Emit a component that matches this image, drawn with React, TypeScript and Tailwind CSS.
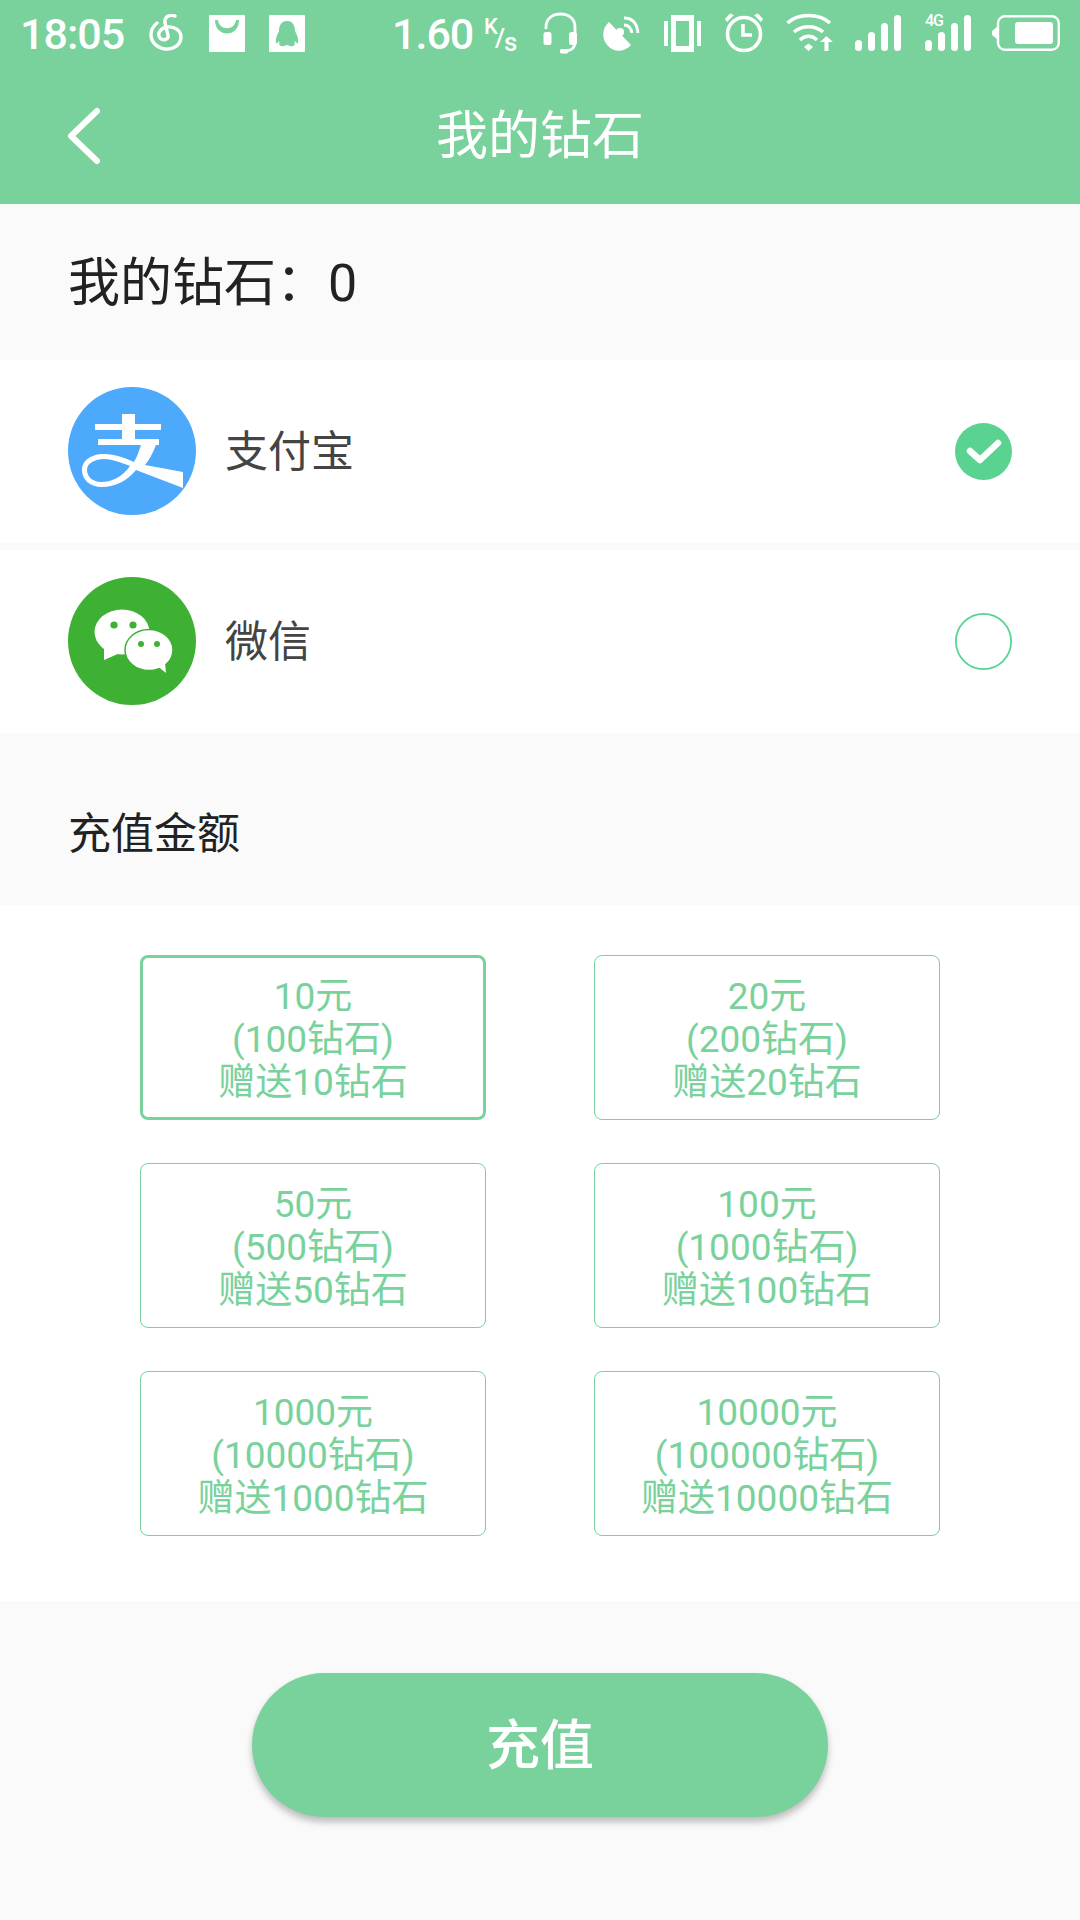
import React from 'react';

const options = [
  { price: '10元', stones: '(100钻石)', bonus: '赠送10钻石', selected: true },
  { price: '20元', stones: '(200钻石)', bonus: '赠送20钻石' },
  { price: '50元', stones: '(500钻石)', bonus: '赠送50钻石' },
  { price: '100元', stones: '(1000钻石)', bonus: '赠送100钻石' },
  { price: '1000元', stones: '(10000钻石)', bonus: '赠送1000钻石' },
  { price: '10000元', stones: '(100000钻石)', bonus: '赠送10000钻石' },
];

const StatusBar = () => (
  <div className="flex h-[66px] items-center text-white">
    <span className="mt-[2px] ml-[20px] w-[114px] text-[43px] leading-none font-medium tracking-[-1px]">18:05</span>
    {/* netease */}
    <svg className="ml-[15px]" width="36" height="38" viewBox="0 0 36 38" fill="none" stroke="white" strokeWidth="3.4" strokeLinecap="round">
      <path d="M26 2 C20 0 15 3 16 9 L19 21 C20 26 14 27 11 24 C8 20 11 14 18 13 C26 12 32 17 32 23 C32 31 24 36 16 35 C8 34 2 28 2 21 C2 16 4 12 8 9" />
    </svg>
    {/* bag */}
    <svg className="ml-[24px]" width="36" height="37" viewBox="0 0 36 37">
      <path fillRule="evenodd" fill="white" d="M1 0 H35 a1 1 0 0 1 1 1 V36 a1 1 0 0 1-1 1 H1 a1 1 0 0 1-1-1 V1 a1 1 0 0 1 1-1 Z M6 5 C6 23 30 23 30 5 H27 C26 16 10 16 9 5 Z" />
    </svg>
    {/* qq */}
    <svg className="ml-[24px]" width="36" height="37" viewBox="0 0 36 37">
      <path fillRule="evenodd" fill="white" d="M1 0 H35 a1 1 0 0 1 1 1 V36 a1 1 0 0 1-1 1 H1 a1 1 0 0 1-1-1 V1 a1 1 0 0 1 1-1 Z M18 6 C12 6 10 11 10 16 C8 20 6 24 7 28 C8 29 9 27 10 26 C11 28 9 30 12 31 C15 32 16 30 18 30 C20 30 21 32 24 31 C27 30 25 28 26 26 C27 27 28 29 29 28 C30 24 28 20 26 16 C26 11 24 6 18 6 Z" />
    </svg>
    <span className="mt-[2px] ml-[87px] w-[78px] text-[43px] leading-none font-medium tracking-[-1px]">1.60</span>
    <span className="ml-[14px] flex h-[37px] w-[36px] leading-none font-medium">
      <span className="mt-[1px] text-[22px]">K</span>
      <span className="mt-[10px] -ml-[3px] text-[26px] leading-none">/</span>
      <span className="mt-[14px] -ml-[1px] text-[26px]">s</span>
    </span>
    {/* headset */}
    <svg className="ml-[23px]" width="35" height="42" viewBox="0 0 35 42" fill="none" stroke="white">
      <path d="M3 17 V15 C3 7 9 2 17.500 2 C26 2 32 7 32 15 V30 C32 36 28 39 22 39" strokeWidth="2.800" />
      <rect x="0.500" y="20" width="8" height="13" rx="2.500" fill="white" stroke="none" />
      <rect x="26" y="20" width="8" height="13" rx="2.500" fill="white" stroke="none" />
      <rect x="17" y="37" width="8" height="4.500" rx="1.500" fill="white" stroke="none" />
    </svg>
    {/* dish */}
    <svg className="ml-[24px]" width="38" height="40" viewBox="0 0 38 40" fill="none">
      <path d="M7 9 L29 32 C23 39 12 40 6 33 C-1 26 0 15 7 9 Z" fill="white" />
      <circle cx="18" cy="19" r="4" fill="white" />
      <path d="M20 13 C24 13 27 16 28 21 M20 6 C28 6 33 11 34 21" stroke="white" strokeWidth="2.800" transform="translate(2 -1)" />
    </svg>
    {/* vibrate */}
    <svg className="ml-[24px]" width="37" height="37" viewBox="0 0 37 37">
      <path fillRule="evenodd" fill="white" d="M7 0 H30 V37 H7 Z M12 6 V31 H25 V6 Z M0 6 H4 V31 H0 Z M33 6 H37 V31 H33 Z" />
    </svg>
    {/* alarm */}
    <svg className="ml-[24px]" width="38" height="40" viewBox="0 0 38 40" fill="none" stroke="white">
      <circle cx="19" cy="21" r="16.500" strokeWidth="3.600" />
      <path d="M18 11 V22 H27" strokeWidth="3.600" />
      <path d="M0 6 L5 0.500 L9 2 L2 9 Z M38 6 L33 0.500 L29 2 L36 9 Z" fill="white" stroke="none" />
    </svg>
    {/* wifi with upload arrow */}
    <svg className="ml-[23px]" width="48" height="40" viewBox="0 0 48 40" fill="none" stroke="white" strokeWidth="3.600">
      <path d="M1.500 10 C12 0 33 0 44 10" />
      <path d="M8 19 C16 12 29 12 37 19" />
      <path d="M14 27 C19 22 26 22 31 27" />
      <path d="M18 34 L22.500 30.500 L27 34 L22.500 38 Z" fill="white" stroke="none" />
      <path d="M34 29 L40.500 23 L47 29 H42.500 V38 H38.500 V29 Z" fill="white" stroke="none" />
    </svg>
    {/* signal */}
    <svg className="ml-[21px]" width="46" height="36" viewBox="0 0 46 36" fill="white">
      <rect x="0" y="25" width="7" height="11" rx="3.500" />
      <rect x="13" y="17" width="7" height="19" rx="3.500" />
      <rect x="26" y="8" width="7" height="28" rx="3.500" />
      <rect x="39" y="0" width="7" height="36" rx="3.500" />
    </svg>
    {/* 4g signal */}
    <div className="relative ml-[24px] h-[36px] w-[46px]">
      <span className="absolute -top-[2px] left-0 text-[16px] leading-none font-medium tracking-[-1px]">4G</span>
      <svg width="46" height="36" viewBox="0 0 46 36" fill="white">
        <rect x="0" y="25" width="7" height="11" rx="3.500" />
        <rect x="13" y="17" width="7" height="19" rx="3.500" />
        <rect x="26" y="8" width="7" height="28" rx="3.500" />
        <rect x="39" y="0" width="7" height="36" rx="3.500" />
      </svg>
    </div>
    {/* battery */}
    <svg className="ml-[21px]" width="68" height="36" viewBox="0 0 68 36" fill="none">
      <rect x="6" y="1.200" width="60.800" height="33.600" rx="7" stroke="white" strokeWidth="2.400" />
      <path d="M5 12 L0 16 V20 L5 24 Z" fill="white" />
      <rect x="23" y="7" width="38" height="22" rx="3" fill="white" />
    </svg>
  </div>
);

const AlipayIcon = () => (
  <svg width="128" height="128" viewBox="0 0 128 128" className="-mt-[2px] shrink-0">
    <circle cx="64" cy="64" r="64" fill="#4DA9FB" />
    <g fill="white">
      <rect x="27" y="37" width="66" height="6" />
      <rect x="54" y="27" width="13" height="28" />
      <rect x="30" y="52" width="61" height="6" />
      <path
        fillRule="evenodd"
        d="M73 58 H88 C85 66 81 73 77 78 L115 85 V101 L68 83 C58 95 46 100 34 100 C21 100 14 92 14 83 C14 73 24 67 36 67 C47 67 57 71 66 75 C69 70 71 64 73 58 Z M33 95 C25 95 19 90 19 83 C19 76 27 72 36 72 C45 72 54 76 62 79 C55 89 45 95 33 95 Z"
      />
    </g>
  </svg>
);

const WechatIcon = () => (
  <svg width="128" height="128" viewBox="0 0 128 128" className="-mt-[2px] shrink-0">
    <circle cx="64" cy="64" r="64" fill="#3EB134" />
    <ellipse cx="54" cy="55" rx="27.500" ry="22.500" fill="white" />
    <path d="M36 70 L36 83 L52 76 Z" fill="white" />
    <circle cx="46" cy="48" r="3.600" fill="#3EB134" />
    <circle cx="65" cy="48" r="3.600" fill="#3EB134" />
    <ellipse cx="81" cy="73" rx="24" ry="20.500" fill="white" stroke="#3EB134" strokeWidth="1.500" />
    <path d="M88 88 L98 96 L97 86 Z" fill="white" />
    <circle cx="73" cy="67" r="3" fill="#3EB134" />
    <circle cx="89" cy="67" r="3" fill="#3EB134" />
  </svg>
);

const PayRow = ({ icon, name, checked }: { icon: React.ReactNode; name: string; checked?: boolean }) => (
  <div className="flex h-[183px] items-center bg-white pr-[68px] pl-[68px]">
    {icon}
    <span className="mt-[2px] ml-[29px] flex-1 text-[43px] leading-none text-[#444444]">{name}</span>
    {checked ? (
      <svg width="57" height="57" viewBox="0 0 57 57">
        <circle cx="28.500" cy="28.500" r="28.500" fill="#5AD391" />
        <path d="M15 28 L25 37 L43 20" fill="none" stroke="white" strokeWidth="6.500" strokeLinecap="round" strokeLinejoin="round" />
      </svg>
    ) : (
      <svg width="57" height="57" viewBox="0 0 57 57">
        <circle cx="28.500" cy="28.500" r="27.600" fill="none" stroke="#5AD391" strokeWidth="1.800" />
      </svg>
    )}
  </div>
);

export default function App() {
  return (
    <div className="flex min-h-[1920px] flex-col bg-[#FAFAFA] font-['Roboto','Noto_Sans_CJK_SC',sans-serif]">
      <div className="h-[204px] bg-[#79D19B]">
        <StatusBar />
        <div className="grid h-[138px] grid-cols-[1fr_auto_1fr] items-center pt-[4px]">
          <svg className="-mt-[2px] ml-[65px]" width="38" height="58" viewBox="0 0 38 58" fill="none">
            <path d="M32 4 L6 29 L32 54" stroke="white" strokeWidth="6" strokeLinecap="round" strokeLinejoin="round" />
          </svg>
          <span className="text-[52px] leading-none text-white">我的钻石</span>
        </div>
      </div>

      <div className="flex h-[156px] items-center pt-[4px] pl-[68px] text-[52px] leading-none text-[#222222]">
        我的钻石：0
      </div>

      <div className="flex flex-col gap-[7px]">
        <PayRow icon={<AlipayIcon />} name="支付宝" checked />
        <PayRow icon={<WechatIcon />} name="微信" />
      </div>

      <div className="flex h-[172px] items-center pt-[30px] pl-[68px] text-[43px] leading-none text-[#222222]">
        充值金额
      </div>

      <div className="grid h-[696px] grid-cols-[346px_346px] content-start justify-center gap-x-[108px] gap-y-[43px] bg-white pt-[50px]">
        {options.map((o) => (
          <div
            key={o.price}
            className={`flex h-[165px] flex-col items-center justify-center rounded-[8px] border-[#79D19B] pt-[3px] text-center text-[37px] leading-[43px] text-[#79D19B] ${
              o.selected ? 'border-[3px]' : 'border'
            }`}
          >
            <span>{o.price}</span>
            <span>{o.stones}</span>
            <span>{o.bonus}</span>
          </div>
        ))}
      </div>

      <div className="flex flex-1 justify-center pt-[72px]">
        <button className="h-[144px] w-[576px] rounded-full bg-[#79D19B] pt-[2px] text-[54px] font-medium text-white shadow-[0_5px_7px_rgba(0,0,0,0.25)]">
          充值
        </button>
      </div>
    </div>
  );
}
